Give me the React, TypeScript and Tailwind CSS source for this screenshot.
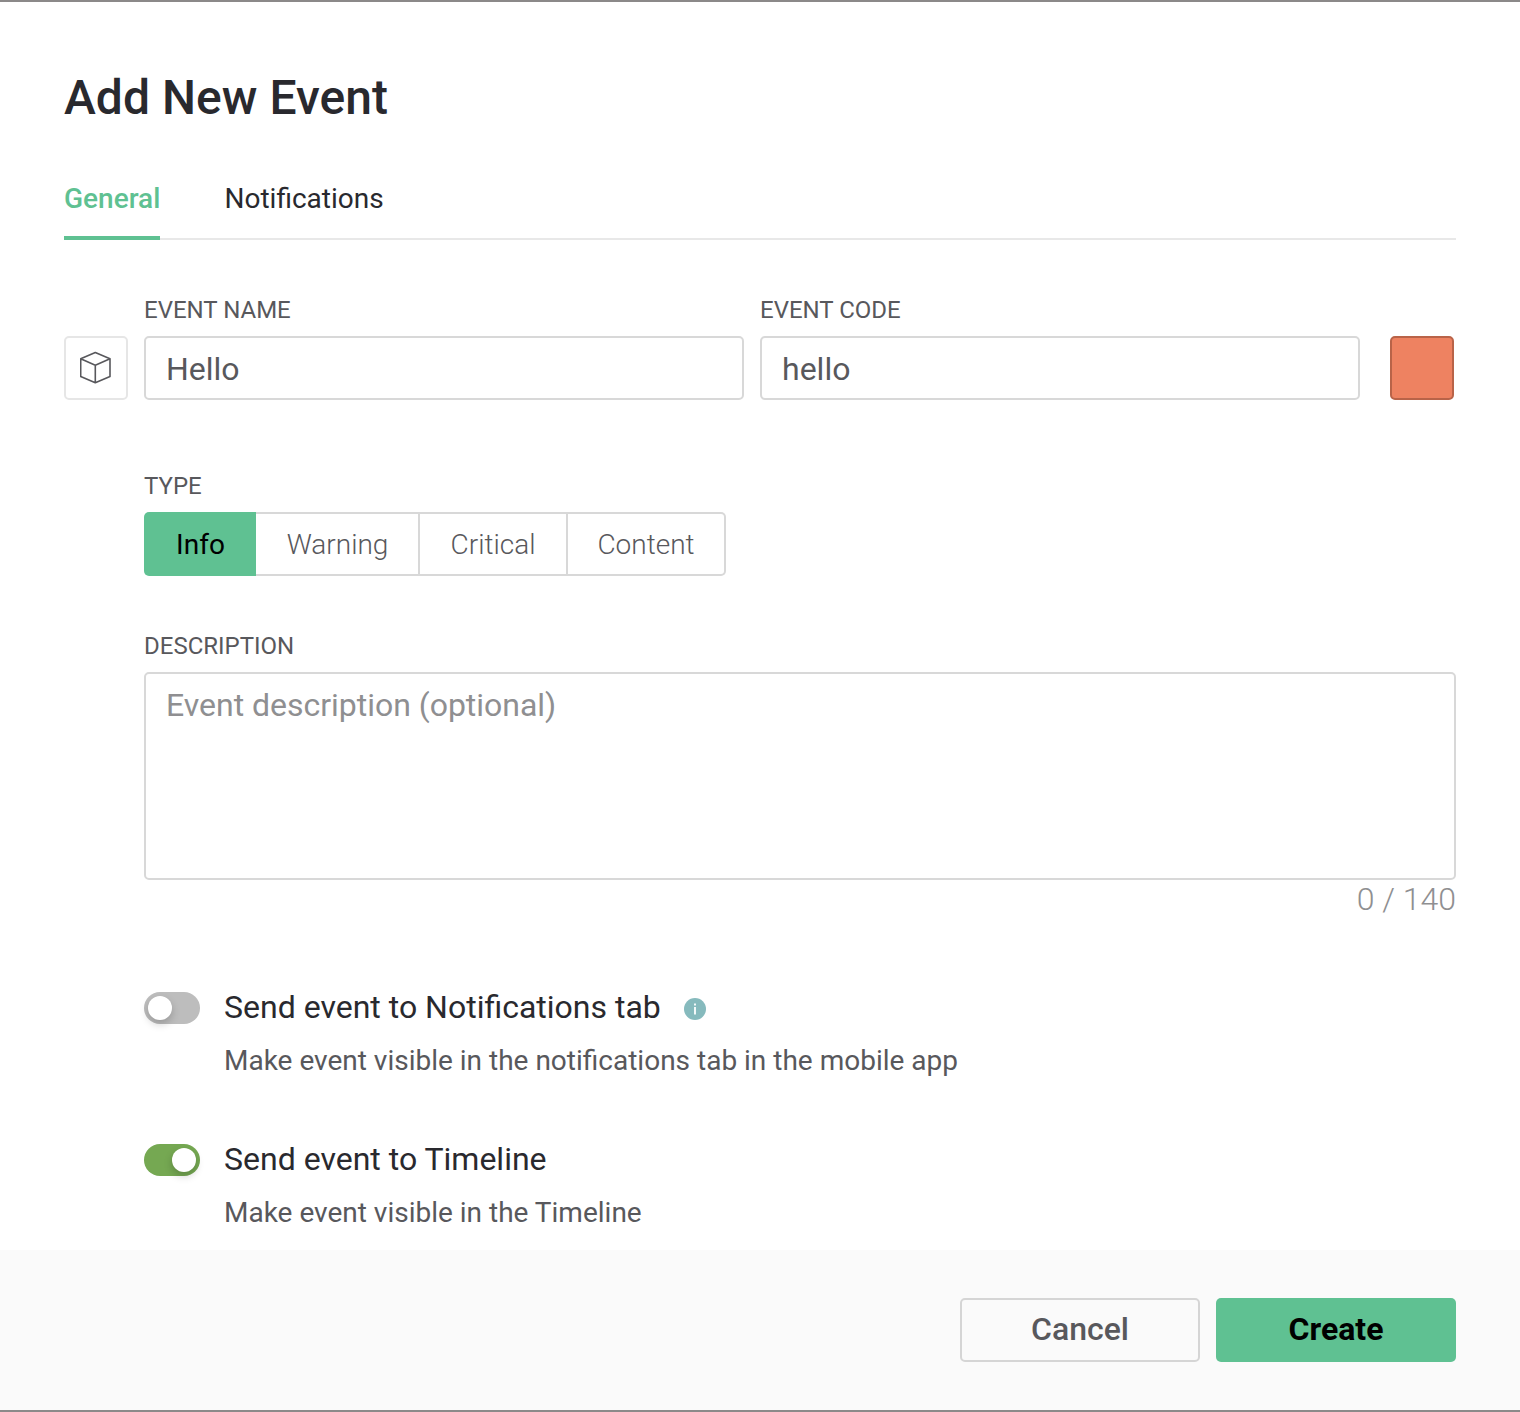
import React from "react";

const types = [
  { name: "Warning", width: "w-[164px] pl-px" },
  { name: "Critical", width: "w-[148px]" },
  { name: "Content", width: "w-[158px]" },
];

function Label({ children }: { children: React.ReactNode }) {
  return <div className="h-7 text-[24px] leading-7 text-[#58585c]">{children}</div>;
}

function Toggle({ on }: { on?: boolean }) {
  return (
    <div className={`flex h-8 w-14 shrink-0 items-center rounded-full px-1 ${on ? "justify-end bg-[#75a852]" : "justify-start bg-[#bdbdbd]"}`}>
      <div className="size-6 rounded-full bg-white shadow-[0_4px_8px_rgba(0,0,0,0.2)]" />
    </div>
  );
}

export default function App() {
  return (
    <div className="flex h-[1412px] w-[1520px] flex-col border-y-2 border-[#8b8989] bg-white font-['Roboto',sans-serif]">
      <main className="flex h-[1248px] flex-col px-16 pt-[66px]">
        <h1 className="h-[60px] text-[48px] leading-[60px] font-medium tracking-[0.03px] text-[#29292e]">Add New Event</h1>
        <nav className="mt-[48px] flex h-16 gap-16 border-b-2 border-[#e8e8e8] text-[28px] leading-[46px]">
          <div className="h-16 w-24 border-b-4 border-[#5fc192] font-medium text-[#5fc192]">General</div>
          <div className="pl-[0.5px] text-[#29292e]">Notifications</div>
        </nav>
        <div className="mt-14 flex items-end">
          <div className="flex size-16 items-center justify-center rounded-[5px] border-2 border-[#e6e6e6]">
            <svg width="32" height="34" viewBox="0 0 32 34" fill="none" stroke="#58585c" strokeWidth="1.6" strokeLinejoin="round">
              <path d="M15.3 1.5 30 7.8v17.7l-14.7 6.3L.7 25.5V7.8zM.7 7.8l14.6 6.4L30 7.8M15.3 14.2v17.6" />
            </svg>
          </div>
          <div className="ml-4 w-[600px]">
            <Label>EVENT NAME</Label>
            <div className="mt-3 h-16 rounded-[5px] border-2 border-[#d8d8d8] px-5 text-[32px] leading-[62px] text-[#58585c]">Hello</div>
          </div>
          <div className="ml-4 w-[600px]">
            <Label>EVENT CODE</Label>
            <div className="mt-3 h-16 rounded-[5px] border-2 border-[#d8d8d8] px-5 text-[32px] leading-[62px] text-[#58585c]">hello</div>
          </div>
          <div className="ml-[30px] size-16 rounded-[5px] border-2 border-[#b96348] bg-[#ee8261]" />
        </div>
        <div className="mt-[72px] ml-20">
          <Label>TYPE</Label>
          <div className="mt-3 flex h-16 w-[582px] text-center text-[28px] leading-[62px]">
            <div className="w-28 rounded-l-[5px] bg-[#5fc192] pl-px leading-[66px] text-black">Info</div>
            {types.map((t) => (
              <div key={t.name} className={`${t.width} border-y-2 border-r-2 border-[#d8d8d8] font-light text-[#58585c] last:rounded-r-[5px]`}>{t.name}</div>
            ))}
          </div>
        </div>
        <div className="mt-14 ml-20">
          <Label>DESCRIPTION</Label>
          <div className="mt-3 h-52 rounded-[5px] border-2 border-[#d8d8d8] px-5 pt-3 text-[32px] leading-[38px] tracking-[-0.02px] text-[#8f8f91]">Event description (optional)</div>
          <div className="h-[38px] text-right text-[32px] leading-[38px] font-light text-[#8f8f91]">0 / 140</div>
        </div>
        <div className="mt-[70px] ml-20 flex gap-6">
          <div className="pt-1"><Toggle /></div>
          <div>
            <div className="flex h-[38px] items-center gap-[23px] text-[32px] leading-[38px] text-[#29292e]">
              Send event to Notifications tab
              <svg width="22" height="22" viewBox="0 0 22 22" className="mt-1">
                <circle cx="11" cy="11" r="11" fill="#86babd" />
                <path d="M11 9v7.5M11 5.5v2" stroke="white" strokeWidth="1.8" />
              </svg>
            </div>
            <div className="mt-[18px] h-[34px] text-[28px] leading-[34px] text-[#58585c]">Make event visible in the notifications tab in the mobile app</div>
          </div>
        </div>
        <div className="mt-[62px] ml-20 flex gap-6">
          <div className="pt-1"><Toggle on /></div>
          <div>
            <div className="h-[38px] text-[32px] leading-[38px] text-[#29292e]">Send event to Timeline</div>
            <div className="mt-[18px] h-[34px] text-[28px] leading-[34px] text-[#58585c]">Make event visible in the Timeline</div>
          </div>
        </div>
      </main>
      <footer className="flex flex-1 justify-end gap-4 bg-[#fafafa] px-16 pt-12 text-[32px] font-medium">
        <button className="h-16 w-60 rounded-[5px] border-2 border-[#d5d5d5] pb-0.5 leading-[58px] text-[#58585c]">Cancel</button>
        <button className="h-16 w-60 rounded-[5px] bg-[#5fc192] pb-0.5 leading-[62px] font-bold text-black">Create</button>
      </footer>
    </div>
  );
}
